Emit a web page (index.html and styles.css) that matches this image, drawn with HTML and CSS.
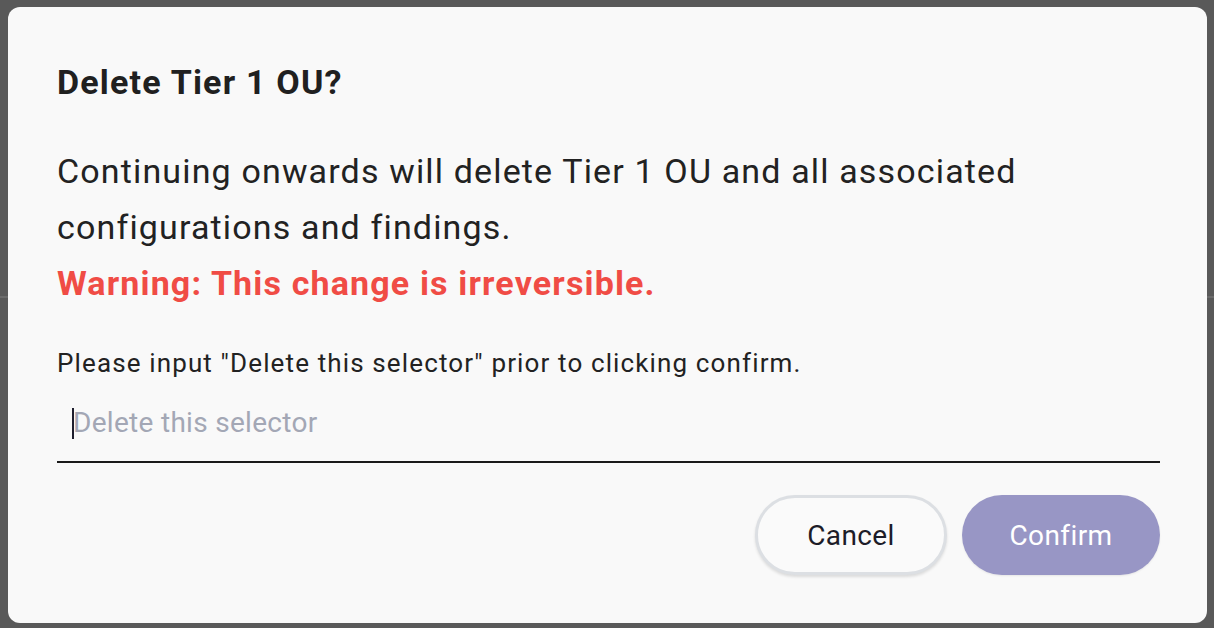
FILE: index.html
```html
<!DOCTYPE html>
<html lang="en">
<head>
<meta charset="utf-8">
<title>Delete Tier 1 OU?</title>
<link rel="stylesheet" href="styles.css">
</head>
<body>
<div class="dialog" role="dialog" aria-labelledby="dlg-title">
  <h2 class="title" id="dlg-title">Delete Tier 1 OU?</h2>
  <div class="content">
    <p class="body-text">Continuing onwards will delete Tier 1 OU and all associated configurations and findings.</p>
    <p class="warning">Warning: This change is irreversible.</p>
  </div>
  <p class="prompt">Please input "Delete this selector" prior to clicking confirm.</p>
  <div class="field">
    <span class="caret"></span><span class="placeholder">Delete this selector</span>
  </div>
  <div class="actions">
    <button class="btn btn-cancel" type="button">Cancel</button>
    <button class="btn btn-confirm" type="button">Confirm</button>
  </div>
</div>
</body>
</html>
```
FILE: styles.css
```css
html, body {
  margin: 0;
  height: 100%;
}
body {
  background: linear-gradient(to bottom, #595959 0, #595959 296px, #6b6b6b 296px, #6b6b6b 298px, #595959 298px);
  padding: 7px 7px 0 8px;
  box-sizing: border-box;
  font-family: Roboto, "Liberation Sans", sans-serif;
  overflow: hidden;
}
.dialog {
  width: 1199px;
  height: 616px;
  box-sizing: border-box;
  background: #f9f9f9;
  border-radius: 12px;
  padding: 55px 47px 47px 49px;
  display: flex;
  flex-direction: column;
  color: #222222;
}
.title {
  margin: 0;
  font-size: 34px;
  line-height: 40px;
  font-weight: 700;
  letter-spacing: 1.2px;
  color: #202020;
}
.content {
  margin-top: 41px;
}
.body-text, .warning {
  margin: 0;
  font-size: 34px;
  line-height: 56px;
  font-weight: 400;
  letter-spacing: 1.15px;
}
.warning {
  font-weight: 700;
  color: #f04c45;
}
.prompt {
  margin: 36px 0 0;
  font-size: 26px;
  line-height: 32px;
  letter-spacing: 1.13px;
  color: #222;
}
.field {
  margin-top: 23px;
  padding: 1px 0 18px 16px;
  border-bottom: 2px solid #1a1a1a;
  display: flex;
  align-items: center;
  height: 40px;
  box-sizing: content-box;
}
.caret {
  display: block;
  width: 2px;
  height: 31px;
  background: #1e1e2e;
  margin-left: -1px;
  margin-right: -1px;
}
.placeholder {
  font-size: 28px;
  line-height: 40px;
  letter-spacing: 0.3px;
  color: #a3a7b5;
}
.actions {
  margin-top: 32px;
  display: flex;
  justify-content: flex-end;
  gap: 15px;
}
.btn {
  height: 80px;
  border-radius: 40px;
  font-family: Roboto, "Liberation Sans", sans-serif;
  font-size: 28px;
  letter-spacing: 0.4px;
  padding: 0;
  cursor: pointer;
}
.btn-cancel {
  width: 192px;
  background: #fafafa;
  border: 3px solid #dcdfe3;
  color: #1c1c28;
  box-shadow: 0 2px 3px rgba(0,0,0,0.12);
}
.btn-confirm {
  width: 198px;
  background: #9896c5;
  border: none;
  color: #ffffff;
  box-shadow: 0 1px 2px rgba(0,0,0,0.08);
}
```
